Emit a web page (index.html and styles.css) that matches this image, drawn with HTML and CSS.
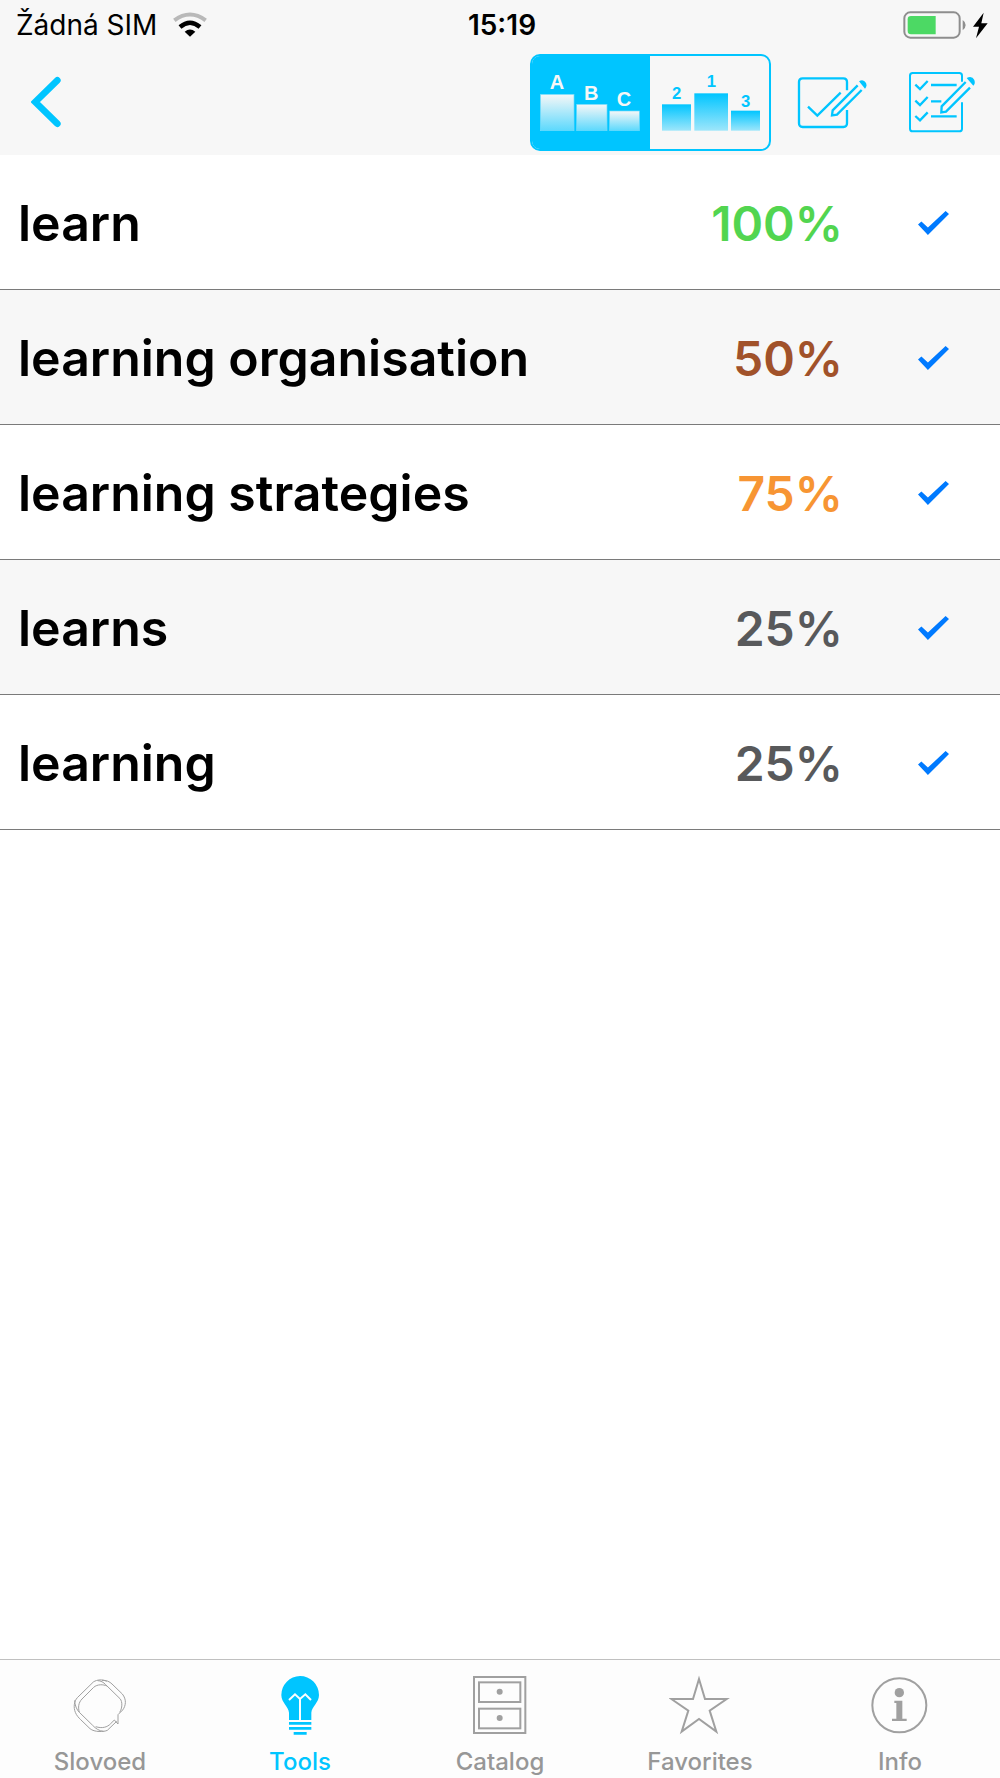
FILE: index.html
```
<!DOCTYPE html>
<html lang="en">
<head>
    <meta charset="UTF-8">
    <meta name="viewport" content="width=device-width, initial-scale=1.0">
    <title>Pronunciation Results</title>
    <link rel="stylesheet" href="styles.css">
</head>
<body>
    <header class="header">
        <div class="status-bar">
            <div class="status-left">
                <span>Žádná SIM</span>
                <svg width="34" height="26" viewBox="0 0 102 78" fill="none">
                    <path d="M4 25 Q51 -10 98 25" stroke="#b9b9b9" stroke-width="12"/>
                    <path d="M21 45 Q51 19 81 45" stroke="#000" stroke-width="13"/>
                    <path d="M35 59 Q51 46 67 59 L51 74 Z" fill="#000"/>
                </svg>
            </div>
            <span class="time">15:19</span>
            <div class="status-right">
                <svg width="85" height="28" viewBox="0 0 255 84">
                    <rect x="4" y="4" width="166" height="76" rx="18" fill="none" stroke="#8e8e8e" stroke-width="6"/>
                    <path d="M24 15 H98 V70 H24 Q14 70 14 60 V25 Q14 15 24 15 Z" fill="#4cd964"/>
                    <path d="M179 27 Q188 33 188 42 Q188 51 179 58 Z" fill="#8e8e8e"/>
                    <path d="M242 5 L210 47 H228 L219 82 L254 37 H235 Z" fill="#000"/>
                </svg>
            </div>
        </div>

        <nav class="toolbar">
            <button class="back-btn" aria-label="Back">
                <svg width="30" height="52" viewBox="0 0 90 156">
                    <path d="M79 13 L13 78 L79 143" fill="none" stroke="#00c5ff" stroke-width="20" stroke-linecap="round"/>
                </svg>
            </button>

            <div class="segment">
                <button class="segment-btn active" aria-label="Sort by name">
                    <svg width="118" height="93" viewBox="0 0 354 279">
                        <defs>
                            <linearGradient id="whiteBar" x1="0" y1="0" x2="0" y2="1">
                                <stop offset="0" stop-color="#f7f7f7"/>
                                <stop offset="1" stop-color="#5cd9fd"/>
                            </linearGradient>
                        </defs>
                        <g fill="url(#whiteBar)" stroke="#70dcfc" stroke-width="2">
                            <rect x="25" y="115" width="101" height="109"/>
                            <rect x="134" y="145" width="91" height="79"/>
                            <rect x="233" y="165" width="89" height="59"/>
                        </g>
                        <g class="bar-letters">
                            <text x="75" y="100">A</text>
                            <text x="178" y="131">B</text>
                            <text x="276" y="150">C</text>
                        </g>
                    </svg>
                </button>
                <button class="segment-btn" aria-label="Sort by score">
                    <svg width="119" height="93" viewBox="0 0 357 279">
                        <defs>
                            <linearGradient id="blueBar" x1="0" y1="0" x2="0" y2="1">
                                <stop offset="0" stop-color="#00c5ff"/>
                                <stop offset="1" stop-color="#9de6fb"/>
                            </linearGradient>
                        </defs>
                        <g fill="url(#blueBar)">
                            <rect x="36" y="145" width="87" height="79"/>
                            <rect x="133" y="112" width="101" height="112"/>
                            <rect x="243" y="164" width="87" height="60"/>
                        </g>
                        <g class="bar-numbers">
                            <text x="80" y="129">2</text>
                            <text x="184" y="94">1</text>
                            <text x="287" y="152">3</text>
                        </g>
                    </svg>
                </button>
            </div>

            <button class="tool-btn" aria-label="Test">
                <svg width="70" height="62" viewBox="0 0 210 186" fill="none" stroke="#00c5ff" stroke-width="7">
                    <path d="M150 58 V33 Q150 22 139 22 H17 Q6 22 6 33 V157 Q6 168 17 168 H139 Q150 168 150 157 V117"/>
                    <path d="M33 107 L61 134 L131 65"/>
                    <path d="M182 43 L107 118 L105 133 L120 131 L194 57"/>
                    <path d="M186 31 Q199 22 207 36 Q211 46 204 53 Z" fill="#00c5ff" stroke="none"/>
                </svg>
            </button>
            <button class="tool-btn" aria-label="Test list">
                <svg width="68" height="62" viewBox="0 0 204 186" fill="none" stroke="#00c5ff" stroke-width="6">
                    <path d="M162 32 V14 Q162 6 154 6 H14 Q6 6 6 14 V173 Q6 181 14 181 H154 Q162 181 162 173 V94"/>
                    <path d="M22 41 L36 54 L59 30 M22 89 L36 102 L59 78 M22 135 L36 148 L59 124" stroke-width="7"/>
                    <path d="M69 42 H146 M69 91 H100 M69 136 H146" stroke-width="7"/>
                    <path d="M173 33 L101 106 L100 124 L114 122 L186 50" stroke-width="7"/>
                    <path d="M176 21 Q192 13 199 27 Q203 38 196 44 Z" fill="#00c5ff" stroke="none"/>
                </svg>
            </button>
        </nav>
    </header>

    <main class="content">
        <table class="results">
            <tbody>
                <tr>
                    <td class="word">learn</td>
                    <td class="score green">100%</td>
                    <td class="check"><input type="checkbox" aria-label="learn" checked></td>
                </tr>
                <tr>
                    <td class="word">learning organisation</td>
                    <td class="score brown">50%</td>
                    <td class="check"><input type="checkbox" aria-label="learning organisation" checked></td>
                </tr>
                <tr>
                    <td class="word">learning strategies</td>
                    <td class="score orange">75%</td>
                    <td class="check"><input type="checkbox" aria-label="learning strategies" checked></td>
                </tr>
                <tr>
                    <td class="word">learns</td>
                    <td class="score gray">25%</td>
                    <td class="check"><input type="checkbox" aria-label="learns" checked></td>
                </tr>
                <tr>
                    <td class="word">learning</td>
                    <td class="score gray">25%</td>
                    <td class="check"><input type="checkbox" aria-label="learning" checked></td>
                </tr>
            </tbody>
        </table>
    </main>

    <nav class="tab-bar">
        <a href="#" class="tab">
            <svg width="60" height="60" viewBox="0 0 180 180" fill="none" stroke="#a0a0a0" stroke-width="3">
                <path d="M110 19 C98 13 82 13 70 21 L22 68 C12 79 10 97 16 112 C20 122 26 128 32 134 L60 161 C73 172 102 171 112 166 L140 139"/>
                <path d="M83 17 C92 17 101 22 107 29 L150 71 C158 80 157 100 149 112"/>
                <path d="M96 16 C109 15 119 20 126 27 L157 57 C170 73 168 92 158 105 L144 119 V147 L133 135 L122 146 C112 157 96 161 77 155"/>
                <path d="M110 33 C101 28 82 27 71 37 L36 72 C25 83 24 98 28 112"/>
                <path d="M14 76 C14 90 20 104 28 112 L68 151 C77 161 88 168 101 169"/>
            </svg>
            <span>Slovoed</span>
        </a>
        <a href="#" class="tab active">
            <svg width="60" height="60" viewBox="0 0 180 180">
                <path d="M90 3 A57 57 0 0 1 147 60 C147 83 125 95 124 113 V135 H57 V113 C56 95 34 83 34 60 A57 57 0 0 1 90 3 Z" fill="#00c5ff"/>
                <path d="M57 75 L75 58 L90 72 L106 58 L123 75 M90 71 V135" fill="none" stroke="#fdfdfd" stroke-width="6"/>
                <path d="M57 145 H124 M57 160 H124 M71 175 H110" stroke="#00c5ff" stroke-width="8"/>
            </svg>
            <span>Tools</span>
        </a>
        <a href="#" class="tab">
            <svg width="60" height="60" viewBox="0 0 180 180" fill="none" stroke="#a0a0a0" stroke-width="6">
                <rect x="12" y="6" width="154" height="168"/>
                <rect x="27" y="22" width="124" height="59"/>
                <rect x="27" y="101" width="124" height="59"/>
                <circle cx="89" cy="50" r="9" fill="#a0a0a0" stroke="none"/>
                <circle cx="89" cy="129" r="9" fill="#a0a0a0" stroke="none"/>
            </svg>
            <span>Catalog</span>
        </a>
        <a href="#" class="tab">
            <svg width="62" height="60" viewBox="0 0 186 180" fill="none" stroke="#a0a0a0" stroke-width="6">
                <path d="M90 12 L108 72 H173 L122 107 L142 170 L90 132 L38 170 L58 107 L7 72 H72 Z"/>
            </svg>
            <span>Favorites</span>
        </a>
        <a href="#" class="tab">
            <svg width="60" height="60" viewBox="0 0 180 180">
                <circle cx="88" cy="91" r="81" fill="none" stroke="#a0a0a0" stroke-width="6"/>
                <circle cx="88" cy="53" r="14" fill="#a0a0a0"/>
                <path d="M73 77 H97 V131 H110 V138 H66 V131 H79 V84 H73 Z" fill="#a0a0a0"/>
            </svg>
            <span>Info</span>
        </a>
    </nav>
</body>
</html>
```
FILE: styles.css
```
* {
    margin: 0;
    padding: 0;
    box-sizing: border-box;
    font-family: 'Inter', 'Liberation Sans', sans-serif;
}

body {
    background: #fff;
    color: #000;
    display: flex;
    flex-direction: column;
    min-height: 100vh;
}

button {
    background: none;
    border: none;
    cursor: pointer;
}

svg {
    display: block;
}

.header {
    background: #f7f7f7;
    padding-bottom: 5px;
}

.status-bar {
    display: grid;
    grid-template-columns: 1fr auto 1fr;
    align-items: center;
    height: 50px;
    padding: 0 12px 0 16px;
    font-size: 28px;
}

.status-left {
    display: flex;
    align-items: center;
    gap: 16px;
}

.status-right {
    display: flex;
    justify-content: flex-end;
}

.time {
    font-weight: 600;
}

.toolbar {
    display: flex;
    align-items: center;
    height: 100px;
    padding: 4px 3px 0 0;
}

.back-btn {
    margin-right: auto;
    padding: 0 31px;
}

.segment {
    display: flex;
    margin-right: 6px;
    border: 2px solid #00c5ff;
    border-radius: 10px;
    overflow: hidden;
}

.segment-btn.active {
    background: #00c5ff;
}

.bar-letters,
.bar-numbers {
    font-weight: bold;
    text-anchor: middle;
}

.bar-letters text,
.bar-numbers text {
    font-family: 'Liberation Sans', sans-serif;
}

.bar-letters {
    font-size: 60px;
    fill: #f7f7f7;
}

.bar-numbers {
    font-size: 50px;
    fill: #00c5ff;
}

.tool-btn {
    display: flex;
    justify-content: center;
    width: 110px;
}

.content {
    flex: 1;
}

.results {
    width: 100%;
    border-collapse: separate;
    border-spacing: 0;
}

.results td {
    height: 135px;
    padding-top: 2px;
    border-bottom: 1px solid #7a7a7a;
    vertical-align: middle;
}

.results tr:nth-child(even) {
    background: #f7f7f7;
}

.results .word {
    padding-left: 18px;
    font-size: 50px;
    font-weight: 600;
}

.results .score {
    width: 160px;
    font-size: 48px;
    font-weight: 600;
    text-align: right;
}

.green { color: #52d550; }
.brown { color: #a1522a; }
.orange { color: #f79533; }
.gray { color: #58595b; }

.results .check {
    width: 157px;
    padding-left: 75px;
}

.check input {
    appearance: none;
    display: block;
    width: 31px;
    height: 24px;
    cursor: pointer;
}

.check input:checked {
    background: #007aff;
    clip-path: polygon(0 56%, 11% 44%, 32% 69%, 89% 0, 100% 13%, 32% 100%);
}

.tab-bar {
    display: grid;
    grid-template-columns: repeat(5, 1fr);
    border-top: 1px solid #c0c0c0;
    background: #fdfdfd;
}

.tab {
    display: flex;
    flex-direction: column;
    align-items: center;
    gap: 12px;
    padding: 15px 0 1px;
    color: #979797;
    font-size: 24px;
    font-weight: 500;
    line-height: 30px;
    text-decoration: none;
}

.tab.active {
    color: #00c5ff;
}
```
